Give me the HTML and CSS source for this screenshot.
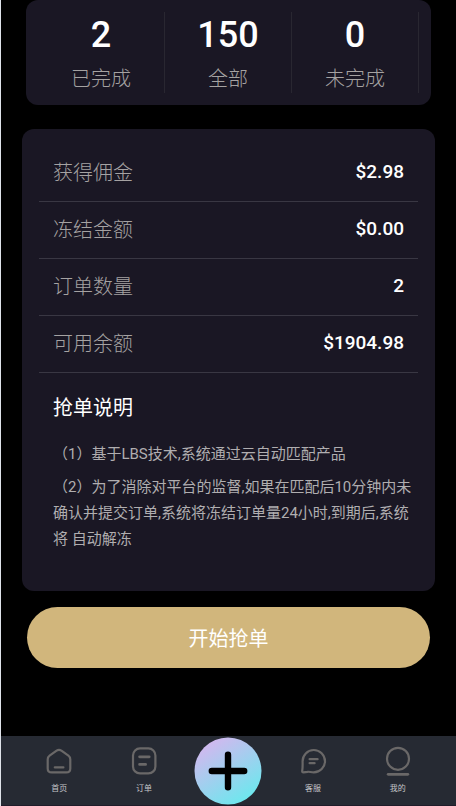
FILE: index.html
```html
<!DOCTYPE html>
<html lang="zh-CN">
<head>
<meta charset="utf-8">
<meta name="viewport" content="width=device-width, initial-scale=1">
<title>抢单</title>
<link rel="stylesheet" href="styles.css">
</head>
<body>
<main class="content">
  <section class="stats">
    <div class="stat"><strong class="stat-value">2</strong><span class="stat-label">已完成</span></div>
    <div class="stat"><strong class="stat-value">150</strong><span class="stat-label">全部</span></div>
    <div class="stat"><strong class="stat-value">0</strong><span class="stat-label">未完成</span></div>
  </section>

  <section class="panel">
    <dl class="rows">
      <div class="row"><dt>获得佣金</dt><dd>$2.98</dd></div>
      <div class="row"><dt>冻结金额</dt><dd>$0.00</dd></div>
      <div class="row"><dt>订单数量</dt><dd>2</dd></div>
      <div class="row"><dt>可用余额</dt><dd>$1904.98</dd></div>
    </dl>
    <div class="notes">
      <h2 class="notes-title">抢单说明</h2>
      <p>（1）基于LBS技术,系统通过云自动匹配产品</p>
      <p>（2）为了消除对平台的监督,如果在匹配后10分钟内未确认并提交订单,系统将冻结订单量24小时,到期后,系统将 自动解冻</p>
    </div>
  </section>

  <button class="start" type="button">开始抢单</button>
</main>

<nav class="tabbar">
  <a class="tab" href="#home">
    <svg class="icon" viewBox="0 0 30 30" aria-hidden="true"><path d="M12.6 4.6Q15 3 17.4 4.6L24.4 9.6Q26.3 11 26.3 13.4V22.4Q26.3 26.4 22.3 26.4H7.7Q3.7 26.4 3.7 22.4V13.4Q3.7 11 5.6 9.6Z"/><path d="M10.8 21.4h8.6"/></svg>
    <span>首页</span>
  </a>
  <a class="tab" href="#orders">
    <svg class="icon" viewBox="0 0 30 30" aria-hidden="true"><rect x="4" y="2.4" width="22.4" height="25" rx="7"/><path class="thick" d="M10.6 10.8h9.6M10.6 18.4h6"/></svg>
    <span>订单</span>
  </a>
  <a class="tab" href="#grab" aria-label="抢单">
    <svg class="plus" viewBox="0 0 68 68" aria-hidden="true">
      <defs><linearGradient id="g" x1="0.22" y1="0.06" x2="0.78" y2="0.94"><stop offset="0" stop-color="#d2b8ef"/><stop offset="1" stop-color="#6ce8ee"/></linearGradient></defs>
      <circle cx="34" cy="34" r="33.5" fill="url(#g)"/>
      <path d="M34 17.8v32.4M17.8 34h32.4" stroke="#000" stroke-width="6.4" stroke-linecap="round"/>
    </svg>
  </a>
  <a class="tab" href="#service">
    <svg class="icon" viewBox="0 0 30 30" aria-hidden="true"><path d="M4.6 15.4A11.2 11.2 0 1 1 15.8 26.4C12.6 26.4 11.6 25.4 9.4 25.8L5.4 26.4Q4 26.4 4.2 25C4.8 21.2 4.6 18.8 4.6 15.4Z"/><path d="M11.6 13.2h8M11.6 17.2h5"/></svg>
    <span>客服</span>
  </a>
  <a class="tab" href="#me">
    <svg class="icon" viewBox="0 0 30 30" aria-hidden="true"><circle cx="15" cy="12.8" r="11"/><path class="thick" d="M5.2 28.3h19.6"/></svg>
    <span>我的</span>
  </a>
</nav>
</body>
</html>
```
FILE: styles.css
```css
* {
  box-sizing: border-box;
}

body {
  margin: 0;
  min-height: 100vh;
  display: flex;
  flex-direction: column;
  border-left: 1px solid #dfe3ea;
  background: #000;
  color: #fff;
  font-family: Roboto, "Noto Sans CJK SC", sans-serif;
  font-size: 19px;
}

.content {
  display: flex;
  flex-direction: column;
}

.stats {
  display: grid;
  grid-template-columns: repeat(3, 1fr);
  margin: 0 25px 24px;
  padding: 12px;
  border-radius: 12px;
  background: #1a1724;
}

.stat {
  display: flex;
  flex-direction: column;
  align-items: center;
  height: 81px;
  border-right: 1px solid #292731;
}

.stat-value {
  font-size: 36px;
  font-weight: 500;
  line-height: 46px;
}

.stat-label {
  color: #a5a2a2;
  font-size: 20px;
  font-weight: 300;
  line-height: 42px;
}

.panel {
  margin: 0 21px 16px;
  padding: 16px 17px;
  border-radius: 12px;
  background: #1a1724;
}

.rows {
  margin: 0;
}

.row {
  display: flex;
  justify-content: space-between;
  align-items: center;
  height: 57px;
  padding: 0 14px 3px;
  border-bottom: 1px solid #393743;
}

.row dt {
  color: #a5a2a2;
  font-size: 20px;
  font-weight: 300;
}

.row dd {
  margin: 0;
  font-weight: 500;
}

.notes {
  margin: 16px 4px 0 14px;
  padding-bottom: 16px;
  color: #b0aeb0;
  font-size: 15px;
  line-height: 26px;
}

.notes-title {
  margin: 0 0 14px;
  color: #fff;
  font-size: 20px;
  font-weight: 400;
  line-height: 38px;
}

.notes p {
  margin: 0 0 7px;
}

.start {
  margin: 0 26px 24px;
  height: 61px;
  border: 0;
  border-radius: 31px;
  background: #d1b67c;
  color: #fff;
  font: inherit;
  font-size: 20px;
}

.tabbar {
  display: grid;
  grid-template-columns: repeat(5, 1fr);
  height: 70px;
  margin-top: auto;
  padding: 0 16px;
  border-bottom: 1px solid #201c2a;
  background: #262a33;
}

.tab {
  display: flex;
  flex-direction: column;
  align-items: center;
  padding-top: 10px;
  color: #c4c5c8;
  font-size: 8px;
  line-height: 12px;
  text-decoration: none;
}

.icon {
  width: 30px;
  height: 30px;
  margin-bottom: 7px;
  fill: none;
  stroke: #6a6868;
  stroke-width: 2.2;
  stroke-linecap: round;
  stroke-linejoin: round;
}

.thick {
  stroke-width: 2.8;
}

.tab:has(.plus) {
  padding-top: 1px;
}

.plus {
  width: 68px;
  height: 68px;
}
```
